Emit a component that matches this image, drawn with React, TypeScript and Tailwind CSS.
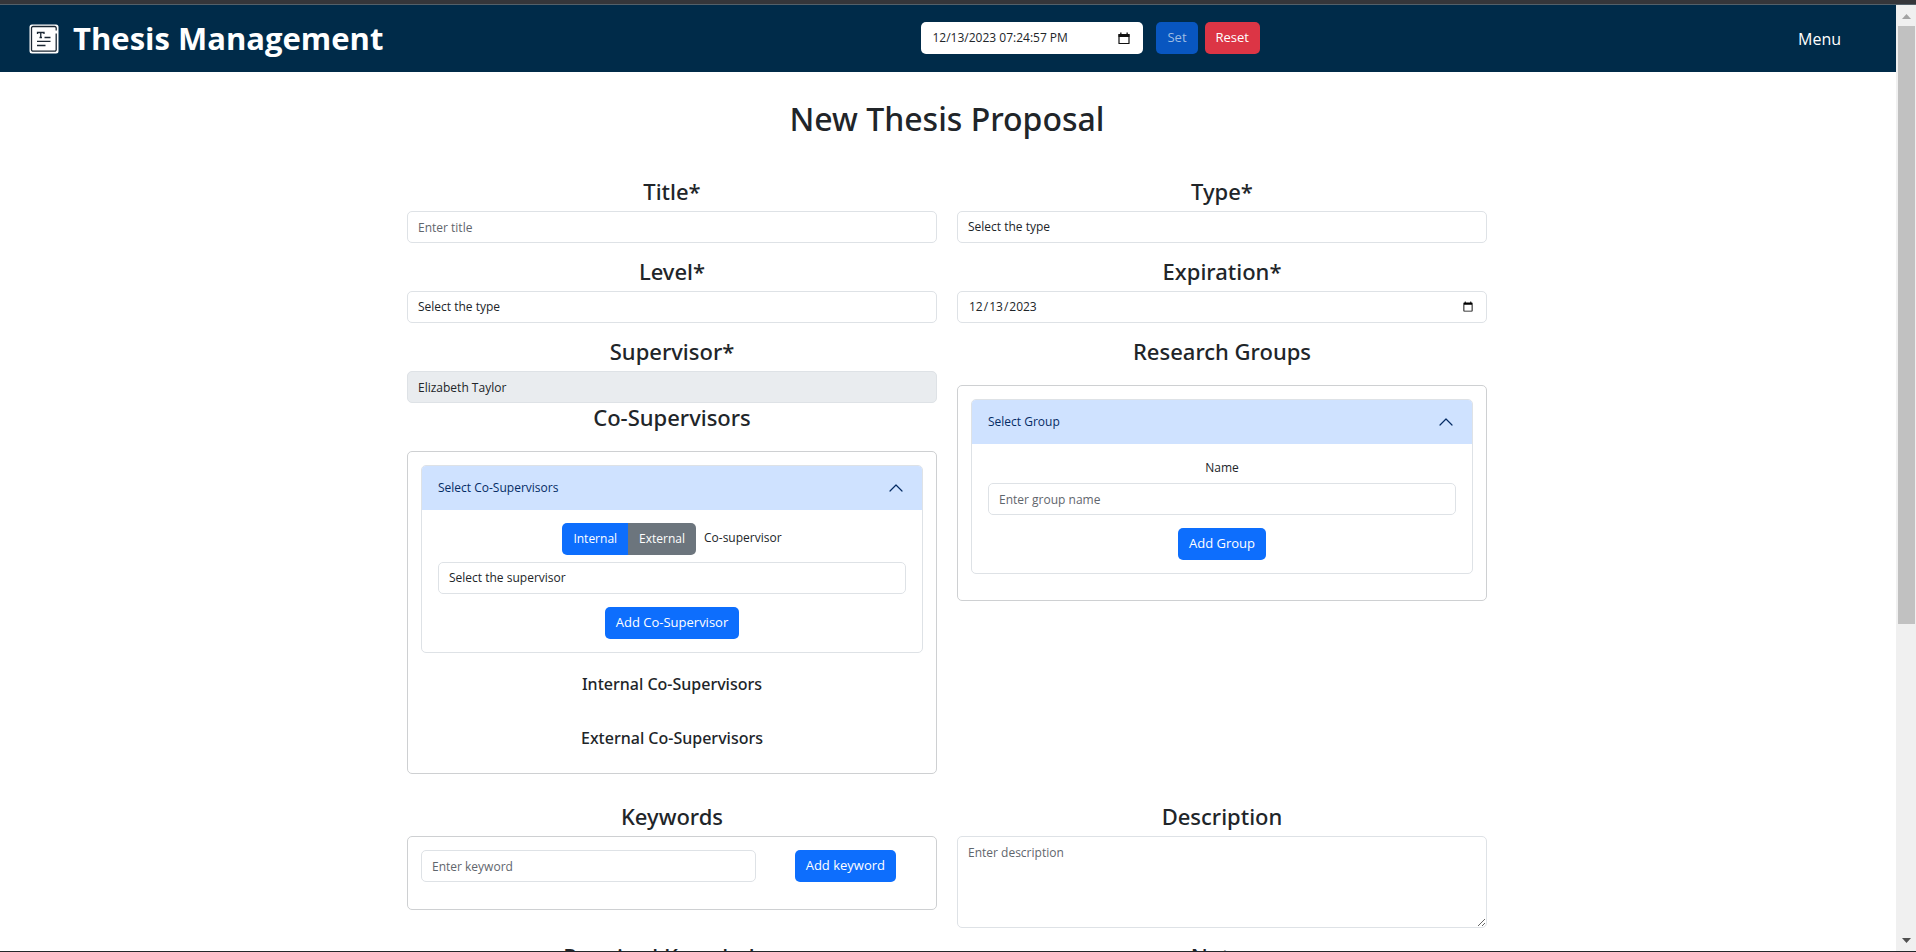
import { useState } from "react";
import type { ReactNode } from "react";

const control =
  "block h-8 w-full appearance-none rounded-[5px] border border-[#dee2e6] bg-white px-[10px] text-[12px] text-[#212529] placeholder:text-[#5f666d]";
const button = "h-8 rounded-[5px] px-[11px] whitespace-nowrap text-white";

function Heading({ children, htmlFor }: { children: ReactNode; htmlFor?: string }) {
  return (
    <h3 className="text-center font-['Noto_Sans',sans-serif] text-[22px] leading-[29px] font-medium">
      {htmlFor ? <label htmlFor={htmlFor}>{children}</label> : children}
    </h3>
  );
}

function Field({ id, label, children }: { id: string; label: string; children: ReactNode }) {
  return (
    <div className="flex flex-col gap-[5px]">
      <Heading htmlFor={id}>{label}</Heading>
      {children}
    </div>
  );
}

function Accordion({ title, children }: { title: string; children: ReactNode }) {
  const [open, setOpen] = useState(true);
  return (
    <section className="overflow-hidden rounded-[5px] border border-[#dee2e6]">
      <button
        type="button"
        aria-expanded={open}
        onClick={() => setOpen(!open)}
        className="flex h-11 w-full items-center justify-between bg-[#cfe2ff] px-4 text-[12px] text-[#052c65]"
      >
        {title}
        <svg
          viewBox="0 0 16 16"
          className={open ? "mr-[2px] size-4 rotate-180" : "mr-[2px] size-4"}
          fill="none"
          stroke="currentColor"
          strokeWidth="1.2"
          strokeLinecap="round"
          strokeLinejoin="round"
          aria-hidden="true"
        >
          <path d="M2 5l6 6 6-6" />
        </svg>
      </button>
      {open && <div className="flex flex-col px-4 py-[13px]">{children}</div>}
    </section>
  );
}

function Logo() {
  return (
    <svg viewBox="0 0 30 30" className="size-[30px]" aria-hidden="true">
      <rect x="0.5" y="0.5" width="29" height="29" rx="2.5" fill="#fff" />
      <path
        d="M27.200 6.500V4a1.500 1.500 0 0 0-1.500-1.500H4A1.500 1.500 0 0 0 2.500 4v21.700A1.500 1.500 0 0 0 4 27.200h21.700a1.500 1.500 0 0 0 1.500-1.500V9.500"
        fill="none"
        stroke="#1b2733"
        strokeWidth="1.3"
      />
      <path
        d="M8.500 10V8.500h6.500V10M11.750 8.500v5M10.500 13.500h2.500M15.500 13.500h6M8 17.300h13.500M8 21.500h8.500"
        fill="none"
        stroke="#1b2733"
        strokeWidth="1.300"
      />
    </svg>
  );
}

function CalendarIcon() {
  return (
    <svg viewBox="0 0 12 13" className="h-[13px] w-3" aria-hidden="true">
      <path
        d="M1 2.500h10v9H1z"
        fill="none"
        stroke="#111"
        strokeWidth="1.2"
        strokeLinejoin="round"
      />
      <path d="M0.500 2h11v3H0.500zM2.200 0.500h1.300V2H2.200zM8.500 0.500h1.300V2H8.500z" fill="#111" />
    </svg>
  );
}

function Header() {
  return (
    <header className="flex h-[67px] items-center justify-between bg-[#002b49] pr-[55px] pl-[29px] text-white">
      <a href="#home" className="flex items-center gap-[14px] text-[31px] font-bold">
        <Logo />
        Thesis Management
      </a>
      <form className="flex items-center pb-px text-[13px]">
        <div className="mr-[13px] flex h-8 w-[222px] items-center rounded-[5px] bg-white pr-[13px] pl-[11px] text-[#212529]">
          <input
            aria-label="Current date and time"
            defaultValue="12/13/2023 07:24:57 PM"
            className="min-w-0 flex-1 text-[12px]"
          />
          <button type="button" aria-label="Open calendar">
            <CalendarIcon />
          </button>
        </div>
        <button type="button" disabled className={`${button} mr-[7px] bg-[#0856c0] text-[#9dbce3]!`}>
          Set
        </button>
        <button type="reset" className={`${button} bg-[#dc3545]`}>
          Reset
        </button>
      </form>
      <button type="button" className="text-[16px]">Menu</button>
    </header>
  );
}

function Scrollbar() {
  return (
    <div className="flex w-5 shrink-0 flex-col items-center bg-[#f0f0f0]" aria-hidden="true">
      <svg viewBox="0 0 20 21" className="h-[21px] w-5">
        <path d="M6 14l4.500-5 4.500 5z" fill="#a3a3a3" />
      </svg>
      <div className="ml-px h-[598px] w-[17px] bg-[#c1c1c1]" />
      <svg viewBox="0 0 20 21" className="mt-auto h-[21px] w-5">
        <path d="M6 8l4.500 5 4.500-5z" fill="#505050" />
      </svg>
    </div>
  );
}

export default function App() {
  return (
    <div className="flex h-screen flex-col overflow-hidden border-b border-[#24262a] bg-white font-['Open_Sans','Noto_Sans',sans-serif] text-[12px] text-[#212529]">
      <div className="h-[5px] shrink-0 border-b border-[#536069] bg-[#35363a]" />
      <div className="flex min-h-0 flex-1">
        <div className="min-w-0 flex-1 overflow-hidden">
          <Header />
          <main className="mx-auto w-full max-w-[1082px] pr-[2px]">
            <h1 className="pt-[27px] pb-[38px] text-center font-['Noto_Sans',sans-serif] text-[32px] leading-10 font-medium">
              New Thesis Proposal
            </h1>
            <form className="grid grid-cols-2 items-start gap-x-5 gap-y-[14px]">
              <Field id="title" label="Title*">
                <input id="title" placeholder="Enter title" className={control} />
              </Field>
              <Field id="type" label="Type*">
                <select id="type" className={control}>
                  <option>Select the type</option>
                </select>
              </Field>
              <Field id="level" label="Level*">
                <select id="level" className={control}>
                  <option>Select the type</option>
                </select>
              </Field>
              <Field id="expiration" label="Expiration*">
                <input id="expiration" type="date" defaultValue="2023-12-13" className={control} />
              </Field>

              <div>
                <Field id="supervisor" label="Supervisor*">
                  <input
                    id="supervisor"
                    readOnly
                    defaultValue="Elizabeth Taylor"
                    className={`${control} bg-[#e9ecef]!`}
                  />
                </Field>
                <Heading>Co-Supervisors</Heading>
                <div className="mt-[19px] rounded-[5px] border border-[#ced0d2] p-[13px]">
                  <Accordion title="Select Co-Supervisors">
                    <div className="mb-[7px] flex justify-center gap-2">
                      <div className="flex">
                        <button type="button" className={`${button} rounded-r-none bg-[#0d6efd]`}>
                          Internal
                        </button>
                        <button type="button" className={`${button} rounded-l-none bg-[#6c757d]`}>
                          External
                        </button>
                      </div>
                      <label htmlFor="cosupervisor" className="leading-[29px]">
                        Co-supervisor
                      </label>
                    </div>
                    <select id="cosupervisor" className={control}>
                      <option>Select the supervisor</option>
                    </select>
                    <button
                      type="button"
                      className={`${button} mt-[13px] self-center bg-[#0d6efd] text-[13px]`}
                    >
                      Add Co-Supervisor
                    </button>
                  </Accordion>
                  <h4 className="mt-5 text-center font-['Noto_Sans',sans-serif] text-[16px] leading-[22px] font-medium">
                    Internal Co-Supervisors
                  </h4>
                  <h4 className="mt-8 mb-[11px] text-center font-['Noto_Sans',sans-serif] text-[16px] leading-[22px] font-medium">
                    External Co-Supervisors
                  </h4>
                </div>
              </div>
              <div>
                <Heading>Research Groups</Heading>
                <div className="mt-[19px] rounded-[5px] border border-[#ced0d2] px-[13px] pt-[13px] pb-[26px]">
                  <Accordion title="Select Group">
                    <label htmlFor="group" className="mb-[5px] text-center leading-[21px]">
                      Name
                    </label>
                    <input id="group" placeholder="Enter group name" className={control} />
                    <button
                      type="button"
                      className={`${button} mt-[13px] self-center bg-[#0d6efd] text-[13px]`}
                    >
                      Add Group
                    </button>
                  </Accordion>
                </div>
              </div>

              <div className="mt-[14px] flex flex-col gap-[5px]">
                <Heading htmlFor="keyword">Keywords</Heading>
                <div className="grid grid-cols-3 rounded-[5px] border border-[#ced0d2] px-[13px] pt-[13px] pb-[27px]">
                  <input
                    id="keyword"
                    placeholder="Enter keyword"
                    className={`${control} col-span-2`}
                  />
                  <button
                    type="button"
                    className={`${button} ml-3 justify-self-center bg-[#0d6efd] text-[13px]`}
                  >
                    Add keyword
                  </button>
                </div>
              </div>
              <div className="mt-[14px]">
                <Field id="description" label="Description">
                  <textarea
                    id="description"
                    placeholder="Enter description"
                    className={`${control} h-[92px]! resize-y py-[7px]`}
                  />
                </Field>
              </div>
              <Field id="knowledge" label="Required Knowledge">
                <textarea id="knowledge" className={control} />
              </Field>
              <Field id="notes" label="Notes">
                <textarea id="notes" className={control} />
              </Field>
            </form>
          </main>
        </div>
        <Scrollbar />
      </div>
    </div>
  );
}
